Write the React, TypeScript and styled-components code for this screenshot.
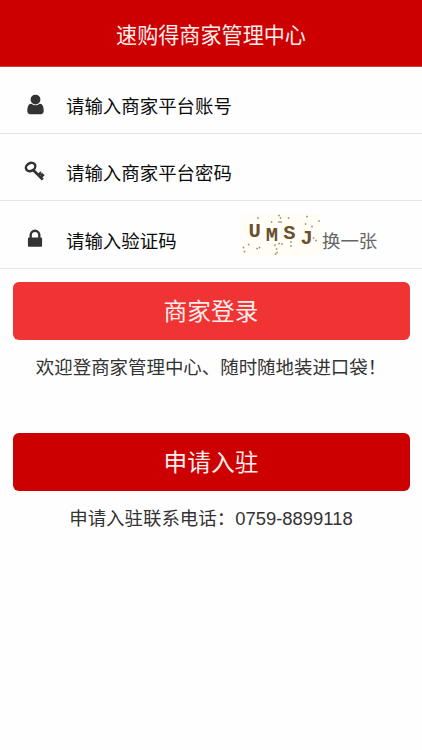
import React from "react";
import styled, { createGlobalStyle } from "styled-components";

const GlobalStyle = createGlobalStyle`
  * { box-sizing: border-box; }
  body {
    margin: 0;
    background: #fefefe;
    color: #333;
    font-family: "Liberation Sans", "Noto Sans CJK SC", sans-serif;
    font-size: 18.45px;
    font-weight: 400;
  }
`;

const Page = styled.main`
  width: 100%;
  background: #fefefe;
`;

const Header = styled.header`
  height: 67px;
  padding-top: 6px;
  display: flex;
  align-items: center;
  justify-content: center;
  background: #c00;
  border-bottom: 1px solid #d33c3c;
`;

const Title = styled.h1`
  margin: 0;
  color: #ffeded;
  font-size: 21.1px;
  font-weight: 400;
  line-height: 30px;
`;

const Field = styled.label<{ $height: number }>`
  height: ${(p) => p.$height}px;
  display: flex;
  align-items: center;
  padding: 14px 0 0 24px;
  border-bottom: 1px solid #e6e6e6;
`;

const IconSlot = styled.span`
  width: 23px;
  height: 22px;
  margin: 0 19px 6px 0;
  flex: none;
  color: #333;
  svg { display: block; }
`;

const Input = styled.input`
  flex: 1;
  min-width: 0;
  height: 30px;
  padding: 0;
  border: 0;
  outline: 0;
  background: transparent;
  font: inherit;
  color: #000;
  &::placeholder { color: #0c0c0c; opacity: 1; }
`;

const Captcha = styled.svg`
  flex: none;
  width: 81px;
  height: 43px;
  margin-bottom: 15px;
`;

const Refresh = styled.span`
  width: 100px;
  flex: none;
  line-height: 30px;
  color: #666;
`;

const Action = styled.section<{ $gap: number }>`
  margin: ${(p) => p.$gap}px 12.5px 0;
`;

const Button = styled.button<{ $tone: string }>`
  display: block;
  width: 100%;
  height: 58px;
  padding: 2px 0 0;
  border: 0;
  border-radius: 6px;
  background: ${(p) => p.$tone};
  color: #ffeded;
  font: inherit;
  font-size: 23.7px;
  line-height: 56px;
`;

const Note = styled.p`
  margin: 14px 0 0;
  line-height: 28px;
  text-align: center;
  white-space: nowrap;
`;

const UserIcon = () => (
  <svg width="23" height="23" viewBox="0 0 1792 1792" fill="currentColor">
    <path d="M1536 1399q0 109-62.5 187t-150.5 78h-854q-88 0-150.5-78t-62.5-187q0-85 8.5-160.5t31.5-152 58.5-131 94-89 134.5-34.5q131 128 313 128t313-128q76 0 134.5 34.5t94 89 58.5 131 31.5 152 8.5 160.5zm-256-887q0 159-112.5 271.5t-271.5 112.5-271.5-112.5-112.5-271.5 112.5-271.5 271.5-112.5 271.5 112.5 112.5 271.5z" />
  </svg>
);

const KeyIcon = () => (
  <svg width="22" height="22" viewBox="0 0 22 22" fill="none" stroke="currentColor">
    <ellipse cx="6.6" cy="7" rx="4.9" ry="3.9" strokeWidth="2.5" transform="rotate(-28 6.6 7)" />
    <path d="M9.2 10 18.8 19.6" strokeWidth="2.7" />
    <path d="M14.4 14.6 17 12M17.2 17.4 20 14.6M15.8 13.3 17.3 14.9 18.7 13.5" strokeWidth="1.9" />
  </svg>
);

const LockIcon = () => (
  <svg width="22" height="22" viewBox="0 0 1792 1792" fill="currentColor">
    <path d="M640 768h512v-192q0-106-75-181t-181-75-181 75-75 181v192zm832 96v576q0 40-28 68t-68 28h-960q-40 0-68-28t-28-68v-576q0-40 28-68t68-28h32v-192q0-184 132-316t316-132 316 132 132 316v192h32q40 0 68 28t28 68z" />
  </svg>
);

const specks = [
  [17, 5], [38, 2.5], [39.5, 5], [47.5, 5], [30.5, 9], [38, 9], [40, 9], [66, 3.5],
  [78, 8], [64.5, 11], [71, 13.5], [2.5, 34.5], [3.5, 38.5], [7.5, 31.5], [16, 35.5],
  [18.5, 34.5], [35.5, 36], [38, 30.5], [41, 31], [36, 39.5], [34.5, 41], [50, 29],
  [50, 33], [72.5, 25], [75, 27.5], [34, 32],
];

const CaptchaImage = () => (
  <Captcha viewBox="0 0 81 43">
    <rect width="81" height="43" fill="#fffdf6" />
    <g fill="#685030" fontFamily="Liberation Mono, monospace" fontSize="20.5" fontWeight="700">
      <text x="7.5" y="24">U</text>
      <text x="24.7" y="28">M</text>
      <text x="42.2" y="26">S</text>
      <text x="59.5" y="31">J</text>
    </g>
    <g fill="#968360">
      {specks.map(([x, y]) => (
        <rect key={`${x}-${y}`} x={x - 0.7} y={y - 0.7} width="1.5" height="1.5" />
      ))}
    </g>
  </Captcha>
);

export default function App() {
  return (
    <Page>
      <GlobalStyle />
      <Header><Title>速购得商家管理中心</Title></Header>
      <Field $height={67}>
        <IconSlot><UserIcon /></IconSlot>
        <Input placeholder="请输入商家平台账号" />
      </Field>
      <Field $height={67}>
        <IconSlot><KeyIcon /></IconSlot>
        <Input type="password" placeholder="请输入商家平台密码" />
      </Field>
      <Field $height={68}>
        <IconSlot><LockIcon /></IconSlot>
        <Input placeholder="请输入验证码" />
        <CaptchaImage />
        <Refresh>换一张</Refresh>
      </Field>
      <Action $gap={13}>
        <Button $tone="#f03333">商家登录</Button>
        <Note>欢迎登商家管理中心、随时随地装进口袋！</Note>
      </Action>
      <Action $gap={51}>
        <Button $tone="#c00">申请入驻</Button>
        <Note>申请入驻联系电话：0759-8899118</Note>
      </Action>
    </Page>
  );
}
